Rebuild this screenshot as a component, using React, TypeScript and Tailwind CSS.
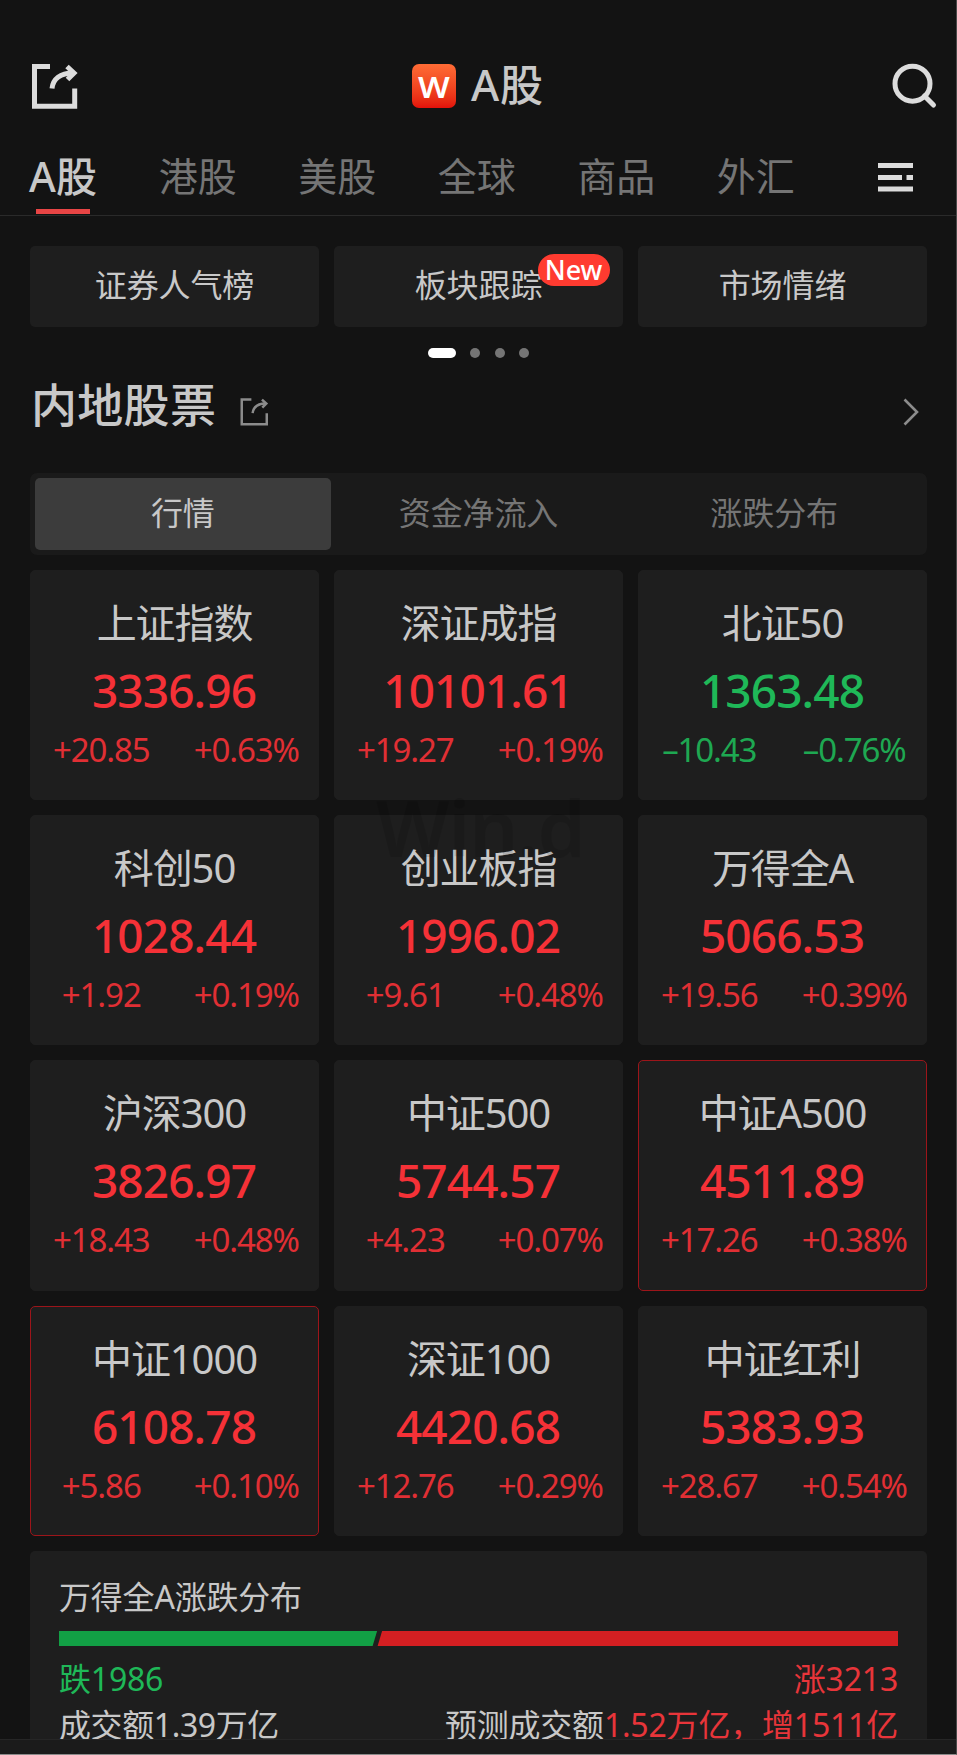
import React from 'react';

type Quote = {
  name: string;
  price: string;
  change: string;
  percent: string;
  down?: boolean;
  flash?: boolean;
};

const tabs = ['A股', '港股', '美股', '全球', '商品', '外汇'];

const quotes: Quote[] = [
  { name: '上证指数', price: '3336.96', change: '+20.85', percent: '+0.63%' },
  { name: '深证成指', price: '10101.61', change: '+19.27', percent: '+0.19%' },
  { name: '北证50', price: '1363.48', change: '–10.43', percent: '–0.76%', down: true },
  { name: '科创50', price: '1028.44', change: '+1.92', percent: '+0.19%' },
  { name: '创业板指', price: '1996.02', change: '+9.61', percent: '+0.48%' },
  { name: '万得全A', price: '5066.53', change: '+19.56', percent: '+0.39%' },
  { name: '沪深300', price: '3826.97', change: '+18.43', percent: '+0.48%' },
  { name: '中证500', price: '5744.57', change: '+4.23', percent: '+0.07%' },
  { name: '中证A500', price: '4511.89', change: '+17.26', percent: '+0.38%', flash: true },
  { name: '中证1000', price: '6108.78', change: '+5.86', percent: '+0.10%', flash: true },
  { name: '深证100', price: '4420.68', change: '+12.76', percent: '+0.29%' },
  { name: '中证红利', price: '5383.93', change: '+28.67', percent: '+0.54%' },
];

function ShareIcon({ className, strokeWidth }: { className: string; strokeWidth: number }) {
  return (
    <svg viewBox="0 0 46 45" fill="none" stroke="currentColor" strokeWidth={strokeWidth} className={className}>
      <path d="M18 2.5H2.5V42.2H42.7V24.5" />
      <path d="M20 24.5C21 15 28 9.2 41 9" />
      <path d="M35 2.5L42 9L35.5 15.5" />
    </svg>
  );
}

function SearchIcon() {
  return (
    <svg viewBox="0 0 46 46" fill="none" stroke="currentColor" strokeWidth="5" className="h-[46px] w-[46px]">
      <circle cx="20.5" cy="20.7" r="17.5" />
      <path d="M32.5 33L41.5 42" strokeLinecap="round" />
    </svg>
  );
}

function MenuIcon() {
  return (
    <svg viewBox="0 0 35 29" fill="currentColor" className="h-[29px] w-[35px]">
      <rect x="0" y="0" width="35" height="5" />
      <rect x="0" y="12" width="24" height="5" />
      <rect x="28.5" y="12" width="6.5" height="5" />
      <rect x="0" y="23.5" width="35" height="5" />
    </svg>
  );
}

function QuoteCard({ quote }: { quote: Quote }) {
  return (
    <div
      className={`h-[230.3px] rounded-[5px] border bg-[#1e1e1e] pt-[24px] text-center ${quote.flash ? 'border-[#9c151a]' : 'border-[#1e1e1e]'} ${quote.down ? 'text-[#1fb858]' : 'text-[#f53137]'}`}
    >
      <div className="h-[56px] text-[40px] leading-[55px] tracking-[-1.1px] text-[#c8c8c8]">{quote.name}</div>
      <div className="mt-[9px] h-[60px] pr-px text-[46px] font-medium leading-[60px] tracking-[-0.9px]">{quote.price}</div>
      <div className="mt-[5px] grid h-[50px] grid-cols-2 text-[33px] leading-[49px] tracking-[-1.1px] opacity-90">
        <span className="pr-[3px]">{quote.change}</span>
        <span>{quote.percent}</span>
      </div>
    </div>
  );
}

export default function App(): React.ReactNode {
  return (
    <div className="flex h-[1755px] w-[957px] flex-col overflow-hidden border-b border-r border-b-[#8a8a8a] border-r-[#4a4a4a] bg-[#131313] font-['Noto_Sans','Noto_Sans_CJK_SC',sans-serif] text-[#c8c8c8]">
      <header className="grid h-[130px] shrink-0 grid-cols-[1fr_auto_1fr] items-center pl-[32px] pr-[18px] pt-[42px]">
        <ShareIcon className="h-[45px] w-[46px] text-[#dcdcdc]" strokeWidth={5} />
        <div className="mr-[14px] flex items-center gap-[15px]">
          <span className="flex h-[44px] w-[44px] items-center justify-center rounded-[7px] bg-gradient-to-b from-[#ff6b35] to-[#e30f0a] text-white">
            <span className="scale-x-115 text-[29px] font-semibold leading-none">W</span>
          </span>
          <span className="-mt-[2px] text-[43px] font-medium leading-[44px] tracking-[0.8px]">A股</span>
        </div>
        <span className="justify-self-end text-[#dcdcdc]">
          <SearchIcon />
        </span>
      </header>

      <nav className="flex h-[86px] shrink-0 items-center justify-between border-b border-[#2a2a2a] pl-[29px] pr-[43px]">
        <div className="flex h-full gap-[61.5px]">
          {tabs.map((tab, i) => (
            <span
              key={tab}
              className={
                i === 0
                  ? 'relative text-[41px] font-medium leading-[92px] tracking-[0.2px]'
                  : 'text-[39px] leading-[92px] text-[#757575]'
              }
            >
              {tab}
              {i === 0 && <i className="absolute bottom-[1px] left-[7px] h-[5px] w-[54px] bg-[#e84545]" />}
            </span>
          ))}
        </div>
        <span className="pt-[9px] text-[#dcdcdc]">
          <MenuIcon />
        </span>
      </nav>

      <main className="relative flex-1 overflow-hidden px-[30px] pr-[29px] pt-[30px]">
        <div className="grid grid-cols-3 gap-[15px] text-center text-[32px] leading-[77px] tracking-[-0.1px]">
          <div className="h-[81px] rounded-[5px] bg-[#1e1e1e]">证券人气榜</div>
          <div className="relative h-[81px] rounded-[5px] bg-[#1e1e1e]">
            板块跟踪
            <span className="absolute left-[203.5px] top-[8px] h-[32px] w-[72px] rounded-full bg-[#ff3b30] text-[27px] font-medium leading-[31px] text-white">
              New
            </span>
          </div>
          <div className="h-[81px] rounded-[5px] bg-[#1e1e1e]">市场情绪</div>
        </div>

        <div className="mt-[20.5px] flex h-[11px] items-center justify-center gap-[14.4px]">
          <i className="h-[10px] w-[28px] rounded-full bg-white" />
          <i className="h-[10px] w-[10px] rounded-full bg-[#757575]" />
          <i className="h-[10px] w-[10px] rounded-full bg-[#757575]" />
          <i className="h-[10px] w-[10px] rounded-full bg-[#757575]" />
        </div>

        <div className="mt-[0.5px] flex h-[90px] items-center">
          <h2 className="ml-[1px] text-[46px] font-medium leading-[60px] tracking-[0.3px]">内地股票</h2>
          <ShareIcon className="ml-[24px] mt-[15px] h-[28px] w-[29px] text-[#8c8c8c]" strokeWidth={4} />
          <svg viewBox="0 0 16 28" fill="none" stroke="#8c8c8c" strokeWidth="2.6" className="ml-auto mr-[8px] mt-[15px] h-[28px] w-[16px]">
            <path d="M1.5 1.5L14 14L1.5 26.5" />
          </svg>
        </div>

        <div className="mt-[24px] grid h-[82px] grid-cols-3 rounded-[7px] bg-[#1a1a1a] p-[5px] text-center text-[32px] leading-[70px] tracking-[-0.1px] text-[#757575]">
          <span className="rounded-[5px] bg-[#3c3c3c] text-[#c8c8c8]">行情</span>
          <span>资金净流入</span>
          <span>涨跌分布</span>
        </div>

        <div className="relative mt-[14.7px] grid grid-cols-3 gap-[15px]">
          {quotes.map((quote) => (
            <QuoteCard key={quote.name} quote={quote} />
          ))}
          <span className="pointer-events-none absolute left-[346px] top-[218px] text-[77px] font-semibold leading-[80px] tracking-[-1px] text-black/12">
            Win.d
          </span>
        </div>

        <div className="mt-[15px] h-[260px] rounded-[5px] bg-[#1e1e1e] px-[29px] pt-[22px] text-[32px] tracking-[-0.2px]">
          <div className="h-[48px] leading-[48px]">万得全A涨跌分布</div>
          <svg viewBox="0 0 840 15" className="mt-[10px] h-[15px] w-full" preserveAspectRatio="none">
            <path d="M0 0H318.5L314 15H0Z" fill="#12a045" />
            <path d="M323.5 0H840V15H319Z" fill="#d41f22" />
          </svg>
          <div className="mt-[9px] flex h-[47px] justify-between leading-[47px]">
            <span className="text-[#1fb858]">跌1986</span>
            <span className="text-[#e8353a]">涨3213</span>
          </div>
          <div className="flex h-[47px] justify-between leading-[45px]">
            <span className="tracking-[-0.4px]">成交额1.39万亿</span>
            <span>
              预测成交额<span className="text-[#e8353a]">1.52万亿，增1511亿</span>
            </span>
          </div>
        </div>
      </main>

      <footer className="h-[15px] shrink-0 border-t border-[#262626] bg-[#1b1b1b]" />
    </div>
  );
}
